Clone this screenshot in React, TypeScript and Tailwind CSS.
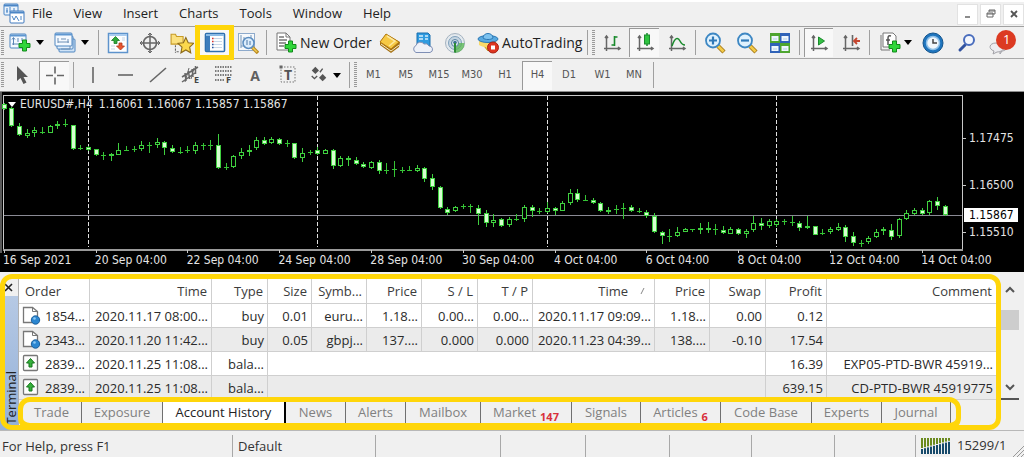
import type { ReactNode } from "react";
import clsx from "clsx";

// [high, body top, body bottom, low, filled] in thirds of a plot unit
type Candle = [number, number, number, number, number];

const candles: Candle[] = [
  [33, 36, 50, 53, 1], [46, 48, 103, 105, 1], [93, 103, 130, 133, 1], [110, 122, 131, 137, 0],
  [105, 115, 122, 134, 0], [105, 121, 123, 125, 1], [100, 103, 122, 124, 0], [87, 97, 103, 110, 0],
  [80, 97, 99, 104, 1], [98, 100, 171, 173, 1], [160, 169, 172, 174, 1], [162, 164, 173, 176, 1],
  [171, 172, 188, 192, 1], [180, 188, 190, 203, 1], [183, 187, 193, 208, 0], [153, 175, 189, 190, 0],
  [163, 174, 175, 176, 1], [163, 170, 173, 180, 1], [148, 160, 170, 178, 0], [150, 158, 160, 182, 1],
  [137, 150, 159, 167, 0], [146, 149, 167, 188, 1], [160, 167, 181, 183, 1], [166, 179, 182, 185, 1],
  [163, 175, 178, 184, 1], [150, 158, 178, 186, 0], [153, 159, 161, 174, 1], [143, 158, 163, 173, 0],
  [125, 158, 227, 231, 1], [213, 225, 228, 235, 1], [190, 192, 225, 228, 0], [167, 180, 192, 202, 0],
  [160, 173, 180, 193, 0], [135, 143, 167, 175, 0], [135, 144, 157, 159, 1], [136, 141, 154, 157, 0],
  [139, 141, 157, 159, 1], [145, 153, 155, 164, 1], [152, 154, 199, 201, 1], [168, 184, 199, 209, 0],
  [174, 181, 183, 188, 1], [165, 173, 185, 188, 1], [171, 175, 185, 187, 0], [172, 175, 222, 231, 1],
  [192, 199, 222, 225, 0], [191, 199, 203, 222, 1], [195, 204, 216, 219, 1], [210, 215, 226, 229, 1],
  [208, 210, 227, 231, 0], [204, 209, 236, 247, 1], [214, 233, 235, 247, 1], [206, 232, 234, 254, 1],
  [224, 234, 236, 243, 1], [222, 233, 236, 237, 1], [219, 227, 236, 241, 0], [224, 227, 260, 270, 1],
  [247, 259, 285, 294, 1], [282, 284, 348, 350, 1], [344, 350, 363, 369, 1], [342, 346, 358, 360, 0],
  [337, 341, 345, 352, 0], [337, 341, 345, 363, 1], [340, 347, 365, 398, 1], [353, 364, 394, 405, 1],
  [366, 385, 393, 405, 0], [378, 382, 403, 404, 1], [375, 380, 400, 404, 0], [365, 380, 382, 388, 1],
  [340, 346, 382, 390, 0], [338, 346, 357, 374, 1], [348, 357, 361, 365, 1], [330, 347, 359, 362, 0],
  [345, 348, 357, 370, 1], [326, 334, 356, 358, 0], [291, 304, 333, 340, 0], [291, 304, 325, 330, 1],
  [309, 325, 327, 328, 1], [319, 324, 333, 336, 1], [330, 334, 358, 361, 1], [344, 353, 359, 366, 0],
  [340, 351, 353, 366, 1], [332, 347, 351, 381, 0], [338, 346, 358, 360, 1], [347, 356, 358, 364, 1],
  [355, 359, 373, 377, 1], [362, 373, 419, 423, 1], [417, 420, 431, 456, 1], [411, 432, 434, 449, 1],
  [406, 419, 433, 435, 0], [408, 410, 419, 420, 0], [411, 412, 414, 419, 1], [392, 409, 413, 426, 0],
  [389, 409, 413, 424, 1], [395, 412, 413, 429, 1], [402, 415, 424, 427, 1], [406, 410, 425, 427, 0],
  [408, 411, 426, 429, 1], [411, 417, 426, 437, 0], [371, 394, 415, 419, 0], [378, 393, 402, 414, 1],
  [381, 388, 402, 409, 0], [382, 388, 398, 404, 0], [381, 388, 390, 398, 1], [371, 390, 392, 402, 1],
  [387, 393, 408, 418, 1], [371, 402, 409, 411, 0], [401, 403, 429, 430, 1], [412, 422, 424, 430, 1],
  [406, 412, 421, 427, 0], [394, 404, 413, 416, 0], [399, 404, 434, 449, 1], [421, 433, 454, 461, 1],
  [444, 454, 456, 464, 1], [431, 437, 451, 455, 0], [412, 419, 436, 439, 0], [406, 411, 418, 429, 0],
  [397, 413, 434, 443, 1], [379, 382, 433, 437, 0], [353, 362, 382, 384, 0], [348, 353, 367, 370, 0],
  [348, 353, 365, 370, 1], [323, 328, 364, 368, 0], [315, 328, 343, 354, 1], [340, 342, 370, 372, 1],
];

const candleX = (index: number) => Math.round(3.7 + 7.65 * index);

const dates = [
  "16 Sep 2021",
  "20 Sep 04:00",
  "22 Sep 04:00",
  "24 Sep 04:00",
  "28 Sep 04:00",
  "30 Sep 04:00",
  "4 Oct 04:00",
  "6 Oct 04:00",
  "8 Oct 04:00",
  "12 Oct 04:00",
  "14 Oct 04:00",
];

const columns = [
  { title: "Order", width: "w-[71px]" },
  { title: "Time", width: "w-[122px]" },
  { title: "Type", width: "w-[56px]" },
  { title: "Size", width: "w-[44px]" },
  { title: "Symb...", width: "w-[55px]" },
  { title: "Price", width: "w-[55px]" },
  { title: "S / L", width: "w-[56px]" },
  { title: "T / P", width: "w-[55px]" },
  { title: "Time", width: "w-[122px]", sorted: true },
  { title: "Price", width: "w-[55px]" },
  { title: "Swap", width: "w-[56px]" },
  { title: "Profit", width: "w-[61px]" },
  { title: "Comment", width: "" },
];

const trades = [
  ["1854...", "2020.11.17 08:00...", "buy", "0.01", "euru...", "1.18...", "0.00...", "0.00...", "2020.11.17 09:09...", "1.18...", "0.00", "0.12", ""],
  ["2343...", "2020.11.20 11:42...", "buy", "0.05", "gbpj...", "137....", "0.000", "0.000", "2020.11.23 04:39...", "138....", "-0.10", "17.54", ""],
];

const balances = [
  ["2839...", "2020.11.25 11:08...", "bala...", "16.39", "EXP05-PTD-BWR 45919..."],
  ["2839...", "2020.11.25 11:08...", "bala...", "639.15", "CD-PTD-BWR 45919775"],
];

const tabs = [
  { name: "Trade", width: "w-[60px]" },
  { name: "Exposure", width: "w-[81px]" },
  { name: "Account History", width: "w-[123px]" },
  { name: "News", width: "w-[60px]" },
  { name: "Alerts", width: "w-[60px]" },
  { name: "Mailbox", width: "w-[75px]" },
  { name: "Market", width: "w-[91px]", count: 147 },
  { name: "Signals", width: "w-[69px]" },
  { name: "Articles", width: "w-[80px]", count: 6 },
  { name: "Code Base", width: "w-[91px]" },
  { name: "Experts", width: "w-[70px]" },
  { name: "Journal", width: "w-[69px]" },
];

const timeframes = [
  { name: "M1", width: "w-[33px]" },
  { name: "M5", width: "w-[32px]" },
  { name: "M15", width: "w-[34px]" },
  { name: "M30", width: "w-[32px]" },
  { name: "H1", width: "w-[34px]" },
  { name: "H4", width: "w-[30px]" },
  { name: "D1", width: "w-[34px]" },
  { name: "W1", width: "w-[33px]" },
  { name: "MN", width: "w-[30px]" },
];

const uiFont = "font-['Open_Sans','Noto_Sans',sans-serif]";
const denseFont = "font-['DejaVu_Sans_Condensed','Noto_Sans',sans-serif]";

/* ---------- icons ---------- */

function Icon({ children, size = "size-[22px]" }: { children: ReactNode; size?: string }) {
  return (
    <svg viewBox="0 0 22 22" fill="none" className={clsx("shrink-0", size)} aria-hidden="true">
      {children}
    </svg>
  );
}

const GreenPlus = ({ x = 9, y = 7 }: { x?: number; y?: number }) => (
  <path
    transform={`translate(${x} ${y})`}
    d="M4.500 1h4v3.500H12v4H8.500V12h-4V8.500H1v-4h3.500z"
    fill="#2fd63a"
    stroke="#128a1c"
  />
);

const Axes = () => (
  <path
    d="M5.500 4v15M3 16.500h16M4 6l1.500-2L7 6M17 15l2 1.500L17 18"
    stroke="#666"
    strokeWidth="1.500"
  />
);

const AppLogo = () => (
  <Icon>
    <rect x="1" y="1" width="14" height="11" rx="1" fill="#eaf3fc" stroke="#4b86c6" />
    <path d="M1 2.500h14" stroke="#4b86c6" strokeWidth="2" />
    <path d="M4 5v5M7 4v5M3 8h2M11 5v3" stroke="#4b86c6" />
    <rect x="7" y="8" width="14" height="12" rx="1" fill="#fff" stroke="#3f78bd" />
    <path d="M7 9.500h14" stroke="#4b86c6" strokeWidth="2" />
    <path d="M9 13l2 4 2-4 3 5M18 13v4" stroke="#4b86c6" />
  </Icon>
);

const NewChartIcon = () => (
  <Icon>
    <rect x="1" y="2" width="16" height="14" rx="1" fill="#f4f9ff" stroke="#4f86c0" />
    <path d="M1 3.500h16" stroke="#5e97d1" strokeWidth="2" />
    <path d="M4.500 6v7M3 7.500l1.500-2 1.500 2M3 12h7M9 6v4M13 6v3" stroke="#5b86b5" />
    <GreenPlus />
  </Icon>
);

const ProfilesIcon = () => (
  <Icon>
    <rect x="5" y="7" width="16" height="13" rx="1" fill="#cfe3f7" stroke="#4f86c0" />
    <rect x="3" y="4" width="16" height="13" rx="1" fill="#e3effb" stroke="#4f86c0" />
    <rect x="1" y="1" width="17" height="13" rx="1" fill="#f4f9ff" stroke="#4f86c0" />
    <path d="M1 2.500h17" stroke="#5e97d1" strokeWidth="2" />
    <path d="M4 6v5M4 10h11M14 7v4M7 7h5" stroke="#6d8fb5" />
    <path d="M7 17h9v-3" stroke="#6d8fb5" />
  </Icon>
);

const MarketWatchIcon = () => (
  <Icon>
    <rect x="1.500" y="1.500" width="19" height="19" fill="#fdfeff" stroke="#5d93cc" strokeWidth="1.500" />
    <path d="M2 3h18" stroke="#a9ccef" strokeWidth="2" />
    <path d="M8.500 4.500l4 4H10v3H7v-3H4.500z" fill="#2ea83a" stroke="#1a7d25" strokeWidth=".8" />
    <path d="M13.500 18l-4-4H12v-3h3v3h2.500z" fill="#e8552f" stroke="#b3371a" strokeWidth=".8" />
    <path d="M15 6h3M15 8h3M4 14h4M4 17h4" stroke="#c5d5e5" />
  </Icon>
);

const NavigatorIcon = () => (
  <Icon>
    <circle cx="11" cy="11" r="6.500" stroke="#666" strokeWidth="1.600" />
    <path d="M11 1v20M1 11h20" stroke="#666" strokeWidth="1.500" />
    <path d="M9 3l2-2 2 2M9 19l2 2 2-2M3 9l-2 2 2 2M19 9l2 2-2 2" stroke="#666" />
  </Icon>
);

const FavoritesIcon = () => (
  <Icon size="size-6">
    <path d="M1 3h4l1 2h6v7H1z" fill="#fbe180" stroke="#c79a25" />
    <path d="M5 13v7M8 19H5" stroke="#666" strokeDasharray="2 1" />
    <path
      d="M14.500 6l2.200 4.700 5 .6-3.700 3.500 1 5.200-4.500-2.600L10 20l1-5.200-3.700-3.500 5-.6z"
      fill="#fcd84c"
      stroke="#8d6b1a"
    />
  </Icon>
);

const TerminalIcon = () => (
  <Icon>
    <rect x="1.500" y="1.500" width="19" height="18" rx="1" fill="#fdfeff" stroke="#2f6fae" strokeWidth="1.600" />
    <path d="M2 3h18" stroke="#8bbbe6" strokeWidth="2" />
    <rect x="2" y="4" width="4" height="15" fill="#3d7dbd" />
    <path d="M9 6.500h9M9 9.500h9M9 12.500h9M9 15.500h9" stroke="#c9d8e8" />
    <path d="M8 6.500h1.500M8 9.500h1.500" stroke="#e1322a" strokeWidth="1.500" />
    <path d="M8 12.500h1.500M8 15.500h1.500" stroke="#2c56a0" strokeWidth="1.500" />
  </Icon>
);

const TesterIcon = () => (
  <Icon>
    <rect x="1.500" y="1.500" width="16" height="17" fill="#f6f9fc" stroke="#8eaacb" />
    <path d="M4 3v13M7 5v4M4 14h5M14 3v4" stroke="#7595b8" />
    <path d="M15 15l6 6" stroke="#b98a22" strokeWidth="3.500" />
    <path d="M15 15l5 5" stroke="#f1cb52" strokeWidth="1.500" />
    <circle cx="11.500" cy="11" r="5.500" fill="#d7ebfb" fillOpacity=".85" stroke="#5b8dc0" strokeWidth="1.500" />
    <path d="M10 8v5M13 9v4" stroke="#4d78a8" />
  </Icon>
);

const NewOrderIcon = () => (
  <Icon>
    <path d="M2 1h9l4 4v13H2z" fill="#fff" stroke="#777" />
    <path d="M11 1v4h4" stroke="#777" />
    <path d="M4 5h5M4 8h8M4 11h7M4 14h5" stroke="#777" strokeWidth="1.300" />
    <GreenPlus y={8} />
  </Icon>
);

const MetaEditorIcon = () => (
  <Icon>
    <path d="M7 2l14 8-1 5-8 6L1 13v-3z" fill="#a46f10" />
    <path d="M7 2l13 8-8 7L1 10z" fill="#f6c945" stroke="#b57d14" />
    <path d="M8 4l8 5-6 5" stroke="#fde9a0" strokeWidth="1.500" />
    <path d="M2 12l10 7 8-6" stroke="#f7eec9" />
  </Icon>
);

const CloudIcon = () => (
  <Icon>
    <path d="M5 1h11l2 2v12H5z" fill="#2f9be0" stroke="#1b6fae" />
    <path d="M7 4h4M13 4h3M7 7h4M13 7h3" stroke="#d5eefc" strokeWidth="1.500" />
    <path
      d="M4 20.500a3.800 3.800 0 0 1 0-7 4.500 4.500 0 0 1 8-1.500 4 4 0 0 1 5 2 3.300 3.300 0 0 1 1 6.500z"
      fill="#eef1f8"
      stroke="#7f8fb5"
    />
  </Icon>
);

const SignalsIcon = () => (
  <Icon>
    <circle cx="11" cy="11" r="9.500" fill="#e3e9ee" stroke="#a5b3c0" />
    <circle cx="11" cy="11" r="6.500" fill="#c7d6e2" stroke="#7fa0bb" />
    <path d="M11 11h9.500a9.500 9.500 0 0 1-9.500 10z" fill="#55b54f" fillOpacity=".75" />
    <circle cx="11" cy="11" r="3.500" fill="#dfe9f2" stroke="#54809f" />
    <circle cx="11" cy="10.500" r="1.800" fill="#3e7193" />
    <path d="M11 11v9.500" stroke="#2c8c34" strokeWidth="2" />
  </Icon>
);

const AutoTradingIcon = () => (
  <Icon>
    <path d="M3 9l8 10 8-10z" fill="#f7cd3e" stroke="#c19a22" />
    <path d="M2 8h17v5c-5 3-12 3-17 0z" fill="#f9da6a" />
    <ellipse cx="11" cy="7" rx="10" ry="3.500" fill="#58a9e0" stroke="#2c78b4" />
    <path d="M6 6c0-6 10-6 10 0-2 2-8 2-10 0z" fill="#7cc2ef" stroke="#2c78b4" />
    <circle cx="16" cy="15.500" r="5.500" fill="#dd3520" stroke="#a92214" />
    <rect x="14" y="13.500" width="4" height="4" fill="#fff" />
  </Icon>
);

const BarChartIcon = () => (
  <Icon>
    <Axes />
    <path d="M13.500 4v10M13.500 5h3M10.500 13h3" stroke="#198a2c" strokeWidth="1.600" />
  </Icon>
);

const CandleChartIcon = () => (
  <Icon>
    <Axes />
    <path d="M13 1v13" stroke="#198a2c" strokeWidth="1.500" />
    <rect x="10.500" y="3" width="5" height="9" fill="#2fc440" stroke="#198a2c" />
  </Icon>
);

const LineChartIcon = () => (
  <Icon>
    <Axes />
    <path d="M6 14c3-9 6-9 8-5 1.500 3 3 4 5 4" stroke="#198a2c" strokeWidth="1.500" />
  </Icon>
);

const ZoomIcon = ({ plus = false }) => (
  <Icon>
    <path d="M14 14l6 6" stroke="#a87c1c" strokeWidth="4.500" />
    <path d="M14 14l5.500 5.500" stroke="#f3cb48" strokeWidth="2.500" />
    <circle cx="9" cy="8.500" r="7" fill="#dff1fd" stroke="#3d87c3" strokeWidth="1.800" />
    <path d={plus ? "M9 4.500v8M5 8.500h8" : "M5 8.500h8"} stroke="#2f79b8" strokeWidth="2.200" />
  </Icon>
);

const TilesIcon = () => (
  <Icon>
    <rect x="1" y="1" width="10" height="10" fill="#4ea52f" />
    <rect x="11" y="1" width="10" height="10" fill="#2f62b8" />
    <rect x="1" y="11" width="10" height="10" fill="#2f62b8" />
    <rect x="11" y="11" width="10" height="10" fill="#4ea52f" />
    <path d="M2.500 4h7v5h-7zM12.500 4h7v5h-7zM2.500 14h7v5h-7zM12.500 14h7v5h-7z" fill="#eef6fd" />
    <path d="M4 7h4M14 7h4M4 17h4M14 17h4" stroke="#b5cfe2" />
  </Icon>
);

const AutoScrollIcon = () => (
  <Icon>
    <Axes />
    <path d="M10.500 5v8l6-4z" fill="#35c044" stroke="#198a2c" />
  </Icon>
);

const ChartShiftIcon = () => (
  <Icon>
    <Axes />
    <path d="M12.500 3v11" stroke="#666" strokeWidth="1.600" />
    <path d="M14 9h6M17 6l-3 3 3 3" stroke="#c5452e" strokeWidth="1.800" />
  </Icon>
);

const IndicatorsIcon = () => (
  <Icon>
    <path d="M4 1h10l3 3v11H4z" fill="#fff" stroke="#777" />
    <path d="M2 3v15h9" stroke="#777" />
    <path d="M12 4c-3-1-3 1-3 3v6M7 8h4" stroke="#555" strokeWidth="1.500" />
    <GreenPlus y={8} />
  </Icon>
);

const ClockIcon = () => (
  <Icon>
    <circle cx="11" cy="11" r="10" fill="#1f75be" stroke="#15558d" />
    <circle cx="11" cy="11" r="6.500" fill="#f1f7fc" stroke="#8fc0e8" strokeWidth="1.500" />
    <path d="M11 7v4h4" stroke="#444" strokeWidth="1.500" />
  </Icon>
);

const SearchIcon = () => (
  <Icon>
    <path d="M9 13l-5 5" stroke="#31529f" strokeWidth="3" strokeLinecap="round" />
    <circle cx="13" cy="8" r="5" fill="#f4f7fd" stroke="#4a6dbd" strokeWidth="2" />
  </Icon>
);

const ChatIcon = () => (
  <svg viewBox="0 0 30 28" fill="none" className="w-[30px] h-7" aria-hidden="true">
    <path d="M12 12c6-2 10 1 9 5s-5 5-6 5l-2 3v-3z" fill="#e2e2e6" stroke="#a2a2a8" />
    <path d="M9 14c5 0 8 2 8 4.500S13 23 10 23l-4 2 1-3c-6-2-5-8 2-8z" fill="#ededf1" stroke="#a2a2a8" />
    <circle cx="19" cy="11" r="10" fill="#dc3a22" />
  </svg>
);

const CursorIcon = () => (
  <Icon>
    <path d="M6 2v15l3.500-3 3 6 3-1.500-3-5.500H17z" fill="#555" />
  </Icon>
);

const CrosshairIcon = () => (
  <Icon>
    <path d="M11 1.500v7M11 12.500v7M2 10.500h7M13 10.500h7" stroke="#666" strokeWidth="1.600" />
  </Icon>
);

const VerticalLineIcon = () => (
  <Icon>
    <path d="M11 3v16" stroke="#666" strokeWidth="1.600" />
  </Icon>
);

const HorizontalLineIcon = () => (
  <Icon>
    <path d="M4 11h15" stroke="#666" strokeWidth="1.600" />
  </Icon>
);

const TrendLineIcon = () => (
  <Icon>
    <path d="M3 18L19 4" stroke="#666" strokeWidth="1.600" />
  </Icon>
);

const ChannelIcon = () => (
  <Icon>
    <path d="M2 13L18 3M2 18L15 9M5 9l1 8M8.500 7l1 8M12 5l1 8M15.500 2l0 8" stroke="#666" strokeWidth="1.500" />
    <path d="M5 18L9 4M11 15l3-11" stroke="#666" />
    <text x="14" y="19" fontSize="9" fontWeight="700" fill="#444">E</text>
  </Icon>
);

const FibonacciIcon = () => (
  <Icon>
    <path d="M3 3h17M3 7h17M3 11h17M3 16h10" stroke="#555" strokeWidth="1.500" strokeDasharray="1.500 1" />
    <text x="14" y="19" fontSize="9" fontWeight="700" fill="#444">F</text>
  </Icon>
);

const LabelIcon = () => (
  <Icon>
    <rect x="4" y="3" width="14" height="15" stroke="#777" strokeDasharray="1.500 1.500" />
    <rect x="2.500" y="1.500" width="3" height="3" fill="#666" />
    <text x="7" y="16" fontSize="14" fontWeight="700" fill="#555">T</text>
  </Icon>
);

const ArrowsIcon = () => (
  <Icon size="size-5">
    <path d="M7 2l4 4-4 4-4-4z" fill="#555" />
    <path d="M15 10l4 4-4 4-4-4z" fill="#555" />
    <path d="M3 12l3 3 3-3M12 8l3-4" stroke="#555" strokeWidth="1.500" />
  </Icon>
);

const DocumentIcon = () => (
  <svg viewBox="0 0 19 19" fill="none" className="size-[19px]" aria-hidden="true">
    <path d="M1.500 1.500h9l5 4v11h-14z" fill="#fff" stroke="#777" strokeWidth="1.300" />
    <path d="M10.500 1.500v4h5" stroke="#777" />
    <circle cx="13.500" cy="14" r="4.200" fill="#2b86d0" stroke="#1b5f9c" />
    <circle cx="12.500" cy="12.500" r="1.300" fill="#8cc8f4" />
  </svg>
);

const DepositIcon = () => (
  <svg viewBox="0 0 19 19" fill="none" className="size-[19px]" aria-hidden="true">
    <rect x="1.500" y="1.500" width="14" height="15" rx="1" fill="#fdfdfd" stroke="#777" strokeWidth="1.300" />
    <path d="M8.500 4.500l4 4.500h-2.500v4h-3V9H4.500z" fill="#36b13c" stroke="#14751c" />
  </svg>
);

const ConnectionIcon = () => (
  <svg viewBox="0 0 30 16" className="w-[30px] h-4" aria-hidden="true">
    {[0, 1, 2, 3, 4, 5, 6, 7, 8, 9].map((bar) => (
      <g key={bar}>
        <rect x={bar * 3} y="0" width="2" height={10 - bar * 0.8} fill="#6b8a1e" />
        <rect x={bar * 3} y={11 - bar * 0.8} width="2" height={5 + bar * 0.8} fill="#174a6b" />
      </g>
    ))}
  </svg>
);

/* ---------- toolbar parts ---------- */

const Caret = () => (
  <span className="border-x-4 border-t-[5px] border-x-transparent border-t-black" />
);

const Grip = () => (
  <span className="w-[3px] h-[26px] shrink-0 bg-[repeating-linear-gradient(#9a9a9a_0_1px,#efefef_1px_2px)]" />
);

const Separator = () => (
  <span className="flex w-[9px] shrink-0 justify-center self-stretch py-[3px]">
    <span className="w-px bg-[#a0a0a0]" />
  </span>
);

type ToolProps = {
  label: string;
  width: string;
  pressed?: boolean;
  className?: string;
  children: ReactNode;
};

function Tool({ label, width, pressed = false, className = "justify-center", children }: ToolProps) {
  return (
    <button
      type="button"
      aria-label={label}
      aria-pressed={pressed}
      className={clsx(
        "flex h-[29px] shrink-0 items-center",
        width,
        className,
        pressed && "border-t border-l border-[#999] bg-[#f8f8f8]"
      )}
    >
      {children}
    </button>
  );
}

function MenuBar() {
  return (
    <header className="flex h-[27px] items-center border-t-2 border-b border-t-white border-b-[#a0a0a0] pl-[3px]">
      <AppLogo />
      <nav className="ml-[7px] flex flex-1 gap-[21px] text-[13px] text-[#222]">
        {["File", "View", "Insert", "Charts", "Tools", "Window", "Help"].map((item) => (
          <button key={item} type="button">
            {item}
          </button>
        ))}
      </nav>
      <div className="flex gap-0.5">
        <button type="button" aria-label="Minimize" className="flex size-[21px] items-center justify-center border border-[#e2e2e2] bg-white">
          <svg viewBox="0 0 10 10" className="size-[10px]"><path d="M2 8h5" stroke="#666" strokeWidth="1.500" /></svg>
        </button>
        <button type="button" aria-label="Restore" className="flex size-[21px] items-center justify-center border border-[#e2e2e2] bg-white">
          <svg viewBox="0 0 10 10" fill="none" className="size-[10px]">
            <path d="M3 3V1h6v4H7M1 4h6v4H1zM1 5h6M3 2h6" stroke="#666" />
          </svg>
        </button>
        <button type="button" aria-label="Close" className="flex size-[21px] items-center justify-center border border-[#e2e2e2] bg-white">
          <svg viewBox="0 0 10 10" className="size-[10px]"><path d="M2 2l6 6M8 2L2 8" stroke="#555" strokeWidth="1.800" /></svg>
        </button>
      </div>
    </header>
  );
}

function StandardToolbar() {
  return (
    <div className="flex h-8 items-center border-b border-[#a8a8a8] pl-px">
      <Grip />
      <Tool label="New chart" width="w-[44px]" className="justify-center gap-[5px]">
        <NewChartIcon />
        <Caret />
      </Tool>
      <Tool label="Profiles" width="w-[46px]" className="justify-center gap-[5px]">
        <ProfilesIcon />
        <Caret />
      </Tool>
      <Separator />
      <Tool label="Market Watch" width="w-[29px]"><MarketWatchIcon /></Tool>
      <Tool label="Data Window" width="w-[36px]"><NavigatorIcon /></Tool>
      <Tool label="Navigator" width="w-[27px]"><FavoritesIcon /></Tool>
      <div className="relative">
        <Tool label="Terminal" width="w-[39px]" pressed><TerminalIcon /></Tool>
        <span className="pointer-events-none absolute -inset-y-[3px] inset-x-0 border-[5px] border-[#ffd60a]" />
      </div>
      <Tool label="Strategy Tester" width="w-[28px]"><TesterIcon /></Tool>
      <Separator />
      <Tool label="New Order" width="w-[104px]" className="gap-[3px] pl-1 text-[14px] text-[#222]">
        <NewOrderIcon />
        New Order
      </Tool>
      <Tool label="MetaEditor" width="w-[30px]"><MetaEditorIcon /></Tool>
      <Tool label="Virtual hosting" width="w-[35px]"><CloudIcon /></Tool>
      <Tool label="Signals" width="w-[30px]"><SignalsIcon /></Tool>
      <Tool label="AutoTrading" width="w-[113px]" className="gap-[3px] pl-[7px] text-[14px] text-[#222]">
        <AutoTradingIcon />
        AutoTrading
      </Tool>
      <Separator />
      <Grip />
      <Tool label="Bar chart" width="w-[34px]"><BarChartIcon /></Tool>
      <Tool label="Candlesticks" width="w-[30px]" pressed><CandleChartIcon /></Tool>
      <Tool label="Line chart" width="w-[32px]" className="justify-center pl-1"><LineChartIcon /></Tool>
      <Separator />
      <Tool label="Zoom in" width="w-[30px]"><ZoomIcon plus /></Tool>
      <Tool label="Zoom out" width="w-[34px]"><ZoomIcon /></Tool>
      <Tool label="Tile windows" width="w-[31px]"><TilesIcon /></Tool>
      <Separator />
      <Tool label="Auto scroll" width="w-[29px]" pressed><AutoScrollIcon /></Tool>
      <Tool label="Chart shift" width="w-[32px]" className="justify-center pl-1"><ChartShiftIcon /></Tool>
      <Separator />
      <Tool label="Indicators" width="w-[42px]" className="justify-center gap-[3px]">
        <IndicatorsIcon />
        <Caret />
      </Tool>
      <Tool label="Periods" width="w-[34px]"><ClockIcon /></Tool>
      <Tool label="Search" width="w-[33px]"><SearchIcon /></Tool>
      <div className="relative">
        <Tool label="Messages" width="w-[38px]"><ChatIcon /></Tool>
        <span className="pointer-events-none absolute top-[3px] left-5 text-[13px] leading-4 text-white">1</span>
      </div>
    </div>
  );
}

function DrawingToolbar() {
  return (
    <div className="flex h-8 items-center pl-px">
      <Grip />
      <Tool label="Cursor" width="w-[35px]"><CursorIcon /></Tool>
      <Tool label="Crosshair" width="w-[30px]" pressed><CrosshairIcon /></Tool>
      <Separator />
      <Tool label="Vertical line" width="w-[30px]"><VerticalLineIcon /></Tool>
      <Tool label="Horizontal line" width="w-[34px]"><HorizontalLineIcon /></Tool>
      <Tool label="Trendline" width="w-[32px]"><TrendLineIcon /></Tool>
      <Tool label="Equidistant channel" width="w-[33px]"><ChannelIcon /></Tool>
      <Tool label="Fibonacci retracement" width="w-[32px]"><FibonacciIcon /></Tool>
      <Tool label="Text" width="w-[32px]">
        <span className="text-[14px] font-bold text-[#606060]">A</span>
      </Tool>
      <Tool label="Text label" width="w-[34px]"><LabelIcon /></Tool>
      <Tool label="Arrows" width="w-[40px]" className="justify-center gap-1">
        <ArrowsIcon />
        <Caret />
      </Tool>
      <Separator />
      <Grip />
      <div className={clsx("flex text-[11px] text-[#555]", denseFont)}>
        {timeframes.map(({ name, width }) => (
          <Tool key={name} label={name} width={width} pressed={name === "H4"}>
            {name}
          </Tool>
        ))}
      </div>
      <Separator />
    </div>
  );
}

/* ---------- chart ---------- */

function PricePlot() {
  return (
    <svg viewBox="0 0 963 161" preserveAspectRatio="none" className="h-[161px] w-full" shapeRendering="crispEdges">
      <path d="M1 0v161" stroke="#5a5a5a" strokeWidth="2" />
      <path d="M3.500 157V3.500H962.500V158" fill="none" stroke="#c8c8c8" />
      <path d="M3 158h960" stroke="#9a9a9a" strokeWidth="2" />
      {[11, 41, 71, 101].map((index) => (
        <path key={index} d={`M${candleX(index) + 0.5} 4V155`} stroke="#e0e0e0" strokeDasharray="4 2" />
      ))}
      {dates.map((date, index) => (
        <path key={date} d={`M${candleX(index * 12) + 0.5} 158v3`} stroke="#c8c8c8" />
      ))}
      <path d="M4 123.500H962" stroke="#8a8a94" />
      {candles.map(([high, top, bottom, low, filled], index) => {
        const x = candleX(index);
        const [h, t, b, l] = [high, top, bottom, low].map((value) => Math.round(value / 3));
        // a doji has no room for a hollow body
        if (b - t < 2) {
          return <path key={index} d={`M${x + 0.5} ${h}V${l}M${x - 2} ${t + 0.5}h5`} stroke="#35c435" />;
        }
        return (
          <g key={index} stroke="#3fd03f">
            <path d={`M${x + 0.5} ${h}V${l}`} />
            <rect x={x - 1.5} y={t + 0.5} width="4" height={b - t - 1} fill={filled ? "#d6ffd0" : "#000"} />
          </g>
        );
      })}
    </svg>
  );
}

function Price({ className, children }: { className: string; children: ReactNode }) {
  return (
    <p className={clsx("flex items-center gap-[3px]", className)}>
      <span className="h-px w-[3px] bg-[#c8c8c8]" />
      {children}
    </p>
  );
}

function Chart() {
  return (
    <section
      aria-label="EURUSD# chart"
      className={clsx("relative border-t border-[#8c8c8c] bg-black text-[12px] leading-[14px] text-[#e4e4e4]", denseFont)}
    >
      <div className="flex">
        <div className="min-w-0 flex-1">
          <PricePlot />
        </div>
        <div className="w-[61px] shrink-0">
          <Price className="mt-[39px]">1.17475</Price>
          <Price className="mt-[33px]">1.16500</Price>
          <p className="mt-4 mr-1.5 ml-px bg-white pl-[5px] text-black">1.15867</p>
          <Price className="mt-[3px]">1.15510</Price>
        </div>
      </div>
      <div className="grid h-[19px] grid-cols-11 pr-[11px] pl-[3px] whitespace-nowrap">
        {dates.map((date) => (
          <span key={date}>{date}</span>
        ))}
      </div>
      <p className="absolute top-[5px] left-2 flex items-center">
        <span className="border-x-4 border-t-[5px] border-x-transparent border-t-white" />
        <span className="ml-1">EURUSD#,H4</span>
        <span className="ml-1.5">1.16061 1.16067 1.15857 1.15867</span>
      </p>
    </section>
  );
}

/* ---------- terminal ---------- */

const cell = "overflow-hidden border-r border-b border-[#cfcfcf] pr-[3px] text-right font-normal whitespace-nowrap";

function OrderCell({ icon, children }: { icon: ReactNode; children: ReactNode }) {
  return (
    <td className={cell}>
      <span className="flex items-center gap-1 pl-[3px]">
        {icon}
        {children}
      </span>
    </td>
  );
}

function HistoryTable() {
  return (
    <table className="w-full table-fixed border-separate border-spacing-0 bg-white text-[13px] leading-[18px] text-[#2a2a2a]">
      <colgroup>
        {columns.map(({ title, width }, index) => (
          <col key={title + index} className={width} />
        ))}
      </colgroup>
      <thead>
        <tr className="h-[25px] text-[#3c3c3c]">
          {columns.map(({ title, sorted }, index) => (
            <th key={title + index} scope="col" className={cell}>
              {index === 0 ? (
                <span className="block pl-1.5 text-left">{title}</span>
              ) : (
                <span className={sorted ? "flex items-center justify-end gap-3 pr-1.5" : "pr-px"}>
                  {title}
                  {sorted && (
                    <svg viewBox="0 0 5 8" className="h-2 w-[5px]" aria-label="sorted">
                      <path d="M1 7L4 1" stroke="#888" />
                    </svg>
                  )}
                </span>
              )}
            </th>
          ))}
        </tr>
      </thead>
      <tbody>
        {trades.map(([order, ...rest], row) => (
          <tr key={order} className={clsx("h-6", row % 2 === 1 && "bg-[#ebebeb]")}>
            <OrderCell icon={<DocumentIcon />}>{order}</OrderCell>
            {rest.map((value, index) => (
              <td key={index} className={cell}>{value}</td>
            ))}
          </tr>
        ))}
        {balances.map(([order, time, type, profit, comment], row) => (
          <tr key={profit} className={clsx("h-6", row % 2 === 1 && "bg-[#ebebeb]")}>
            <OrderCell icon={<DepositIcon />}>{order}</OrderCell>
            <td className={cell}>{time}</td>
            <td className={cell}>{type}</td>
            <td className={cell} colSpan={8} />
            <td className={cell}>{profit}</td>
            <td className={cell}>{comment}</td>
          </tr>
        ))}
      </tbody>
    </table>
  );
}

function ScrollBar() {
  return (
    <div className="flex w-[22px] shrink-0 flex-col items-center border-b-2 border-[#555] bg-[#f0f0f0] pl-1">
      <button type="button" aria-label="Scroll up" className="flex h-[22px] items-center">
        <svg viewBox="0 0 10 8" fill="none" className="h-2 w-[10px]">
          <path d="M1 6l4-4 4 4" stroke="#555" strokeWidth="2" />
        </svg>
      </button>
      <span className="mt-[9px] h-5 w-full bg-[#cdcdcd]" />
      <button type="button" aria-label="Scroll down" className="mt-auto flex h-[22px] items-center">
        <svg viewBox="0 0 10 8" fill="none" className="h-2 w-[10px]">
          <path d="M1 2l4 4 4-4" stroke="#555" strokeWidth="2" />
        </svg>
      </button>
    </div>
  );
}

function Terminal() {
  return (
    <section aria-label="Terminal" className="relative flex pt-[7px]">
      <div className="flex w-[19px] shrink-0 flex-col border-r border-[#b0b0b0]">
        <button type="button" aria-label="Close terminal" className="flex h-[17px] items-center pl-1">
          <svg viewBox="0 0 9 9" className="size-[9px]"><path d="M1 1l7 7M8 1L1 8" stroke="#222" strokeWidth="1.600" /></svg>
        </button>
        <div className="flex flex-1 items-end bg-linear-to-b from-[#b6c9e4] to-[#93b0d8] pb-[5px] pl-1">
          <span className="rotate-180 text-[13px] leading-[14px] text-[#222] [writing-mode:vertical-rl]">
            Terminal
          </span>
        </div>
      </div>
      <div className="min-w-0 flex-1">
        <div className="flex pr-[5px]">
          <div className="min-w-0 flex-1">
            <HistoryTable />
          </div>
          <ScrollBar />
        </div>
        <div role="tablist" className="flex h-[30px] pt-0.5 pb-[7px] pl-[3px] text-[13px] text-[#808080]">
          {tabs.map(({ name, width, count }) => (
            <button
              key={name}
              type="button"
              role="tab"
              aria-selected={name === "Account History"}
              className={clsx(
                "flex items-center justify-center gap-1 border-r",
                width,
                name === "Account History" ? "border-r-2 border-black bg-white text-[#222]" : "border-[#707070]"
              )}
            >
              {name}
              {count && <span className="self-end text-[11px] leading-3 font-bold text-[#d8303c]">{count}</span>}
            </button>
          ))}
        </div>
      </div>
      {/* highlight frames */}
      <span className="pointer-events-none absolute top-[2px] right-[23px] bottom-0 left-0 rounded-xl border-[5px] border-[#ffd60a]" />
      <span className="pointer-events-none absolute right-[63px] bottom-0 left-[18px] h-[33px] rounded-xl border-[5px] border-b-[7px] border-[#ffd60a]" />
    </section>
  );
}

function StatusBar() {
  const cells = ["w-[143px]", "w-[125px]", "w-[85px]", "w-[84px]", "w-[82px]", "w-[83px]", "w-[81px]"];

  return (
    <footer className="flex h-[27px] items-end border-t border-[#b8b8b8] text-[13px] text-[#333]">
      <span className="w-[233px] border-r border-[#a8a8a8] pl-0.5 leading-[22px]">For Help, press F1</span>
      {cells.map((width, index) => (
        <span key={width + index} className={clsx("h-[22px] border-r border-[#a8a8a8] pl-[5px] leading-[22px]", width)}>
          {index === 0 && "Default"}
        </span>
      ))}
      <span className="flex h-[22px] min-w-0 flex-1 items-center gap-1.5 pl-[5px]">
        <ConnectionIcon />
        <span className="whitespace-nowrap">15299/1</span>
      </span>
      <svg viewBox="0 0 11 11" className="size-[11px]" aria-hidden="true">
        <path d="M0 11L11 0M4 11l7-7M8 11l3-3" stroke="#999" />
      </svg>
    </footer>
  );
}

export default function App() {
  return (
    <main className={clsx("w-full overflow-hidden bg-[#f0f0f0]", uiFont)}>
      <MenuBar />
      <StandardToolbar />
      <DrawingToolbar />
      <Chart />
      <Terminal />
      <StatusBar />
    </main>
  );
}
